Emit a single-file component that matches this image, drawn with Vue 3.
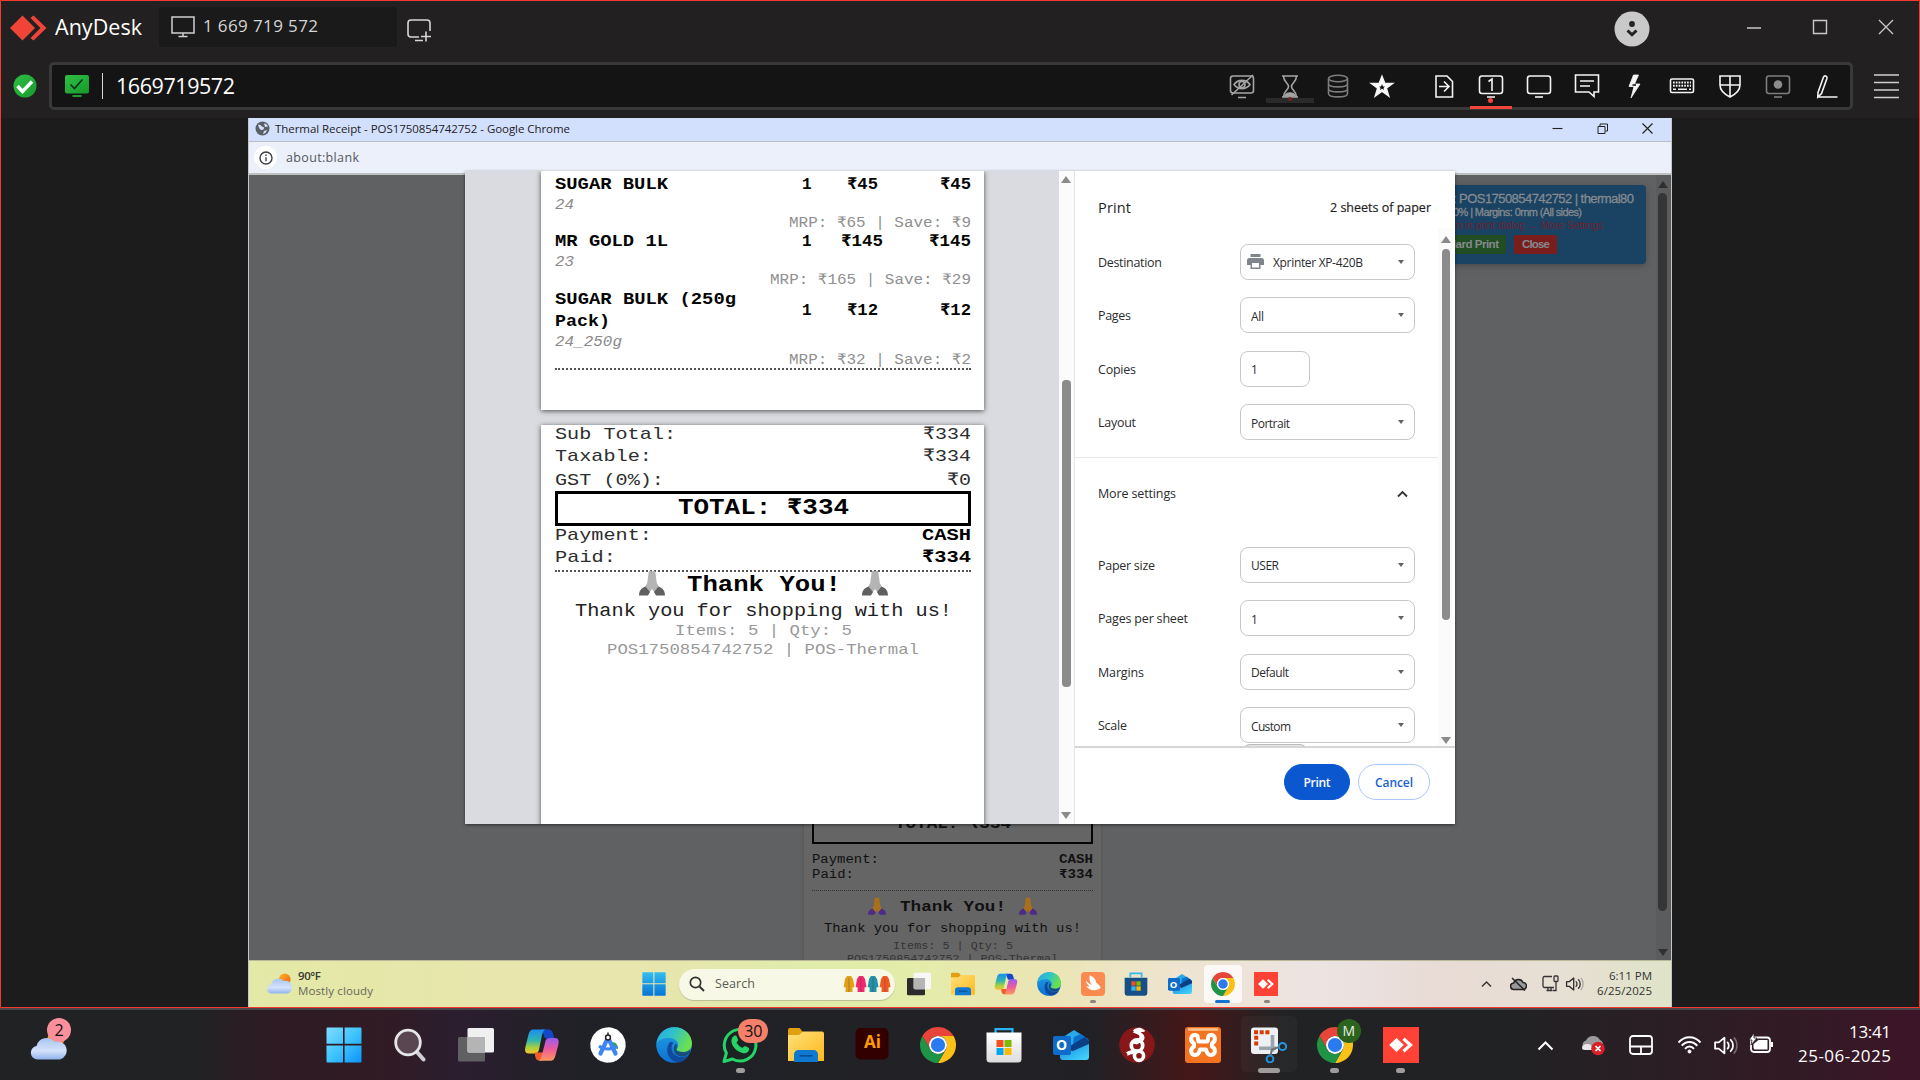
<script setup>
// Makes a label take the given width in pixels: by letter-spacing, or,
// with the .wide modifier, by widening the glyphs themselves.
const vFit = {
  mounted(el, { value, modifiers }) {
    const range = document.createRange()
    range.selectNodeContents(el)
    const natural = range.getBoundingClientRect().width
    if (modifiers.wide) {
      el.style.display = 'inline-block'
      el.style.transformOrigin = '0 50%'
      el.style.transform = `scaleX(${value / natural})`
      el.style.width = natural + 'px'
      el.style.flex = 'none'
      el.style.marginRight = value - natural + 'px'
      return
    }
    const gaps = el.textContent.length - 1
    if (gaps < 1) return
    const spacing = (value - natural) / gaps
    el.style.letterSpacing = spacing + 'px'
    el.style.marginRight = -spacing + 'px'
  },
}

const items = [
  { name: ['SUGAR BULK'], w: [113], sku: '24', sw: 19, price: '₹45', pw: 31, mrp: 'MRP: ₹65 | Save: ₹9', mw: 182 },
  { name: ['MR GOLD 1L'], w: [113], sku: '23', sw: 19, price: '₹145', pw: 42, mrp: 'MRP: ₹165 | Save: ₹29', mw: 201 },
  { name: ['SUGAR BULK (250g', 'Pack)'], w: [181, 55], sku: '24_250g', sw: 67, price: '₹12', pw: 31, mrp: 'MRP: ₹32 | Save: ₹2', mw: 182 },
]
const totals = [
  { k: 'Sub Total:', kw: 121, v: '₹334', vw: 48 },
  { k: 'Taxable:', kw: 97, v: '₹334', vw: 48 },
  { k: 'GST (0%):', kw: 109, v: '₹0', vw: 24 },
]
const basic = [
  { label: 'Destination', lw: 64, value: 'Xprinter XP-420B', vw: 90, icon: true },
  { label: 'Pages', lw: 33, value: 'All', vw: 13 },
  { label: 'Copies', lw: 38, value: '1', vw: 6, input: true },
  { label: 'Layout', lw: 38, value: 'Portrait', vw: 39 },
]
const more = [
  { label: 'Paper size', lw: 57, value: 'USER', vw: 28 },
  { label: 'Pages per sheet', lw: 90, value: '1', vw: 6 },
  { label: 'Margins', lw: 46, value: 'Default', vw: 38 },
  { label: 'Scale', lw: 29, value: 'Custom', vw: 40 },
]
const remoteApps = [
  { id: 'taskview-dark' }, { id: 'explorer' }, { id: 'copilot' }, { id: 'edge' },
  { id: 'swift', dot: true }, { id: 'store-blue' }, { id: 'outlook', letter: 'O' },
  { id: 'chrome', active: true }, { id: 'anydesk', dot: true },
]
const hostApps = [
  { id: 'windows' }, { id: 'search' }, { id: 'taskview' }, { id: 'copilot' }, { id: 'studio' },
  { id: 'edge' }, { id: 'whatsapp', badge: '30', dot: true }, { id: 'explorer' }, { id: 'illustrator', letter: 'Ai' },
  { id: 'chrome' }, { id: 'store' }, { id: 'outlook', letter: 'O' }, { id: 'dragon' }, { id: 'xampp' },
  { id: 'snip', active: true }, { id: 'chrome', avatar: 'M', dot: true }, { id: 'anydesk', dot: true },
]
const coats = ['#e0a018', '#f0286c', '#1f93a8', '#ee5a24']
</script>

<template>
  <div class="screen">
    <svg class="defs" width="0" height="0" aria-hidden="true">
      <defs>
        <linearGradient id="gWin" x1="0" y1="0" x2="1" y2="1"><stop offset="0" stop-color="#7fdcff" /><stop offset=".5" stop-color="#3fc4ff" /><stop offset="1" stop-color="#0a93fb" /></linearGradient>
        <linearGradient id="gWinR" x1="0" y1="0" x2="0" y2="1"><stop offset="0" stop-color="#35bdf0" /><stop offset="1" stop-color="#0674d8" /></linearGradient>
        <linearGradient id="gEdgeA" x1="0" y1="0" x2="1" y2=".4"><stop offset="0" stop-color="#2aa9e8" /><stop offset=".5" stop-color="#2fc3c8" /><stop offset="1" stop-color="#6be04f" /></linearGradient>
        <linearGradient id="gEdgeB" x1="0" y1="0" x2="0" y2="1"><stop offset="0" stop-color="#1fa2e6" /><stop offset="1" stop-color="#0f6fd0" /></linearGradient>
        <linearGradient id="gFold" x1="0" y1="0" x2="1" y2="1"><stop offset="0" stop-color="#ffe07c" /><stop offset="1" stop-color="#fdb91a" /></linearGradient>
        <linearGradient id="gCopA" x1="0" y1="0" x2="0" y2="1"><stop offset="0" stop-color="#1b8ef0" /><stop offset=".45" stop-color="#2fb6b0" /><stop offset=".75" stop-color="#a9cf3f" /><stop offset="1" stop-color="#f5c52c" /></linearGradient>
        <linearGradient id="gCopB" x1="0" y1="0" x2="0" y2="1"><stop offset="0" stop-color="#9a5cf0" /><stop offset=".5" stop-color="#ee5a9a" /><stop offset="1" stop-color="#ff9a5c" /></linearGradient>
        <linearGradient id="gCloud" x1="0" y1="0" x2="0" y2="1"><stop offset="0" stop-color="#a9c5f2" /><stop offset=".6" stop-color="#d4e2fa" /><stop offset="1" stop-color="#8fb2ec" /></linearGradient>
        <linearGradient id="gSun" x1="0" y1="0" x2="1" y2="1"><stop offset="0" stop-color="#fbb52b" /><stop offset="1" stop-color="#f0620f" /></linearGradient>
        <linearGradient id="gWhite" x1="0" y1="0" x2="0" y2="1"><stop offset="0" stop-color="#ffffff" /><stop offset="1" stop-color="#dcdcdc" /></linearGradient>
        <linearGradient id="gGreen" x1="0" y1="0" x2="1" y2="1"><stop offset="0" stop-color="#2fbf45" /><stop offset="1" stop-color="#159a2c" /></linearGradient>
        <linearGradient id="gOut" x1="0" y1="0" x2="1" y2="1"><stop offset="0" stop-color="#1784dd" /><stop offset="1" stop-color="#45dbff" /></linearGradient>
      </defs>
      <symbol id="windows" viewBox="0 0 36 36"><path fill="url(#gWin)" d="M1.5.5H17v16.300H.5V1.500a1 1 0 0 1 1-1zM18.600.5h15.900a1 1 0 0 1 1 1v15.300H18.600zM.5 18.400H17v17.100H1.500a1 1 0 0 1-1-1zM18.600 18.400h16.900v16.100a1 1 0 0 1-1 1H18.600z" /></symbol>
      <symbol id="windows-blue" viewBox="0 0 36 36"><path fill="url(#gWinR)" d="M1.500.5H17v16.300H.5V1.500a1 1 0 0 1 1-1zM18.600.5h15.900a1 1 0 0 1 1 1v15.300H18.600zM.5 18.400H17v17.100H1.500a1 1 0 0 1-1-1zM18.600 18.400h16.900v16.100a1 1 0 0 1-1 1H18.600z" /></symbol>
      <symbol id="search" viewBox="0 0 36 36"><path d="M24.500 24.500l7 8" stroke="#cfcfd2" stroke-width="4" stroke-linecap="round" /><circle cx="16" cy="15.500" r="12.300" fill="#5a4650" stroke="#e6e6e8" stroke-width="2.800" /></symbol>
      <symbol id="taskview" viewBox="0 0 36 36"><rect x="0" y="10" width="27" height="24.500" rx="1.500" fill="#606062" /><rect x="9.500" y="1" width="26.500" height="24.500" rx="1.500" fill="#f0f0f0" /><path d="M9.500 10H27v15.500H11a1.500 1.500 0 0 1-1.500-1.500z" fill="#b4b4b4" /></symbol>
      <symbol id="taskview-dark" viewBox="0 0 36 36"><rect x="0" y="9" width="27" height="26" rx="2" fill="#2b2b2b" /><rect x="10" y="1" width="26" height="25" rx="2" fill="#f7f7f5" /><path d="M10 9H27v17H12a2 2 0 0 1-2-2z" fill="#b5b5b3" /></symbol>
      <symbol id="copilot" viewBox="0 0 36 36">
        <path fill="#1348c8" d="M17 2.500h8c2.500 0 3.500 2 4.500 6l.8 3h-8.500c-2 0-2.800-9-4.800-9z" />
        <path fill="url(#gCopA)" d="M9.500 2.500h12c-2.500 1-3.200 4-4 8l-2.500 12c-.6 2.600-1.800 4-4 4H4.500c-3.400 0-4-3-3-7l3-12c.8-3 2-5 5-5z" />
        <path fill="#ee5d2c" d="M11 25.500h8.500l-2 8h-2c-3 0-3.800-2-4.500-5z" />
        <path fill="url(#gCopB)" d="M25.500 11h5.800c3.400 0 4 3 3 7l-3 11c-.9 3-2 4.800-5 4.800H14.500c2.500-1 3.200-4 4-8l2.800-11c.6-2.600 1.800-3.800 4.200-3.800z" />
      </symbol>
      <symbol id="studio" viewBox="0 0 36 36">
        <circle cx="18" cy="18" r="16" fill="#fff" stroke="#fff" stroke-width="3.400" stroke-dasharray="4.200 2.080" stroke-linecap="round" />
        <path fill="#2f9e44" d="M22 15c4 0 6 3 6 7l-5-1z" />
        <path d="M17.800 11L10.500 26.500M18.200 11l7.300 15.500" stroke="#3f86f5" stroke-width="4.200" stroke-linecap="round" /><path d="M9 19c5 4 13 4 18 0" fill="none" stroke="#3f86f5" stroke-width="3" />
        <circle cx="18" cy="10.500" r="2.400" fill="#fff" stroke="#222" stroke-width="1.500" /><path d="M18 5.500V8" stroke="#222" stroke-width="1.500" />
      </symbol>
      <symbol id="edge" viewBox="0 0 36 36">
        <circle cx="18" cy="18" r="17.800" fill="url(#gEdgeB)" />
        <path fill="#104a9c" d="M14 15c-4 5-4 13 2 18 6 4.500 13 2 17-5-5 3-12 3-15.500-1.500-2.800-3.500-2.500-8 .2-11z" />
        <path fill="url(#gEdgeA)" d="M.6 16C2.500 6 9.500.2 18.500.2 29 .2 36 8 36 16.500c0 5.500-4 8.500-8.500 8.500-4 0-7-1-7-2.500 0-1 1.700-1.800 1.700-4.500 0-4-4-7-9.200-7C7 11 2.500 13 .6 16z" />
        <path d="M34 25.500c-3 4.500-9 5-13 2.500-3.500-2.300-4.500-7-1.500-11.500 3 2 1 5 1 6 0 1.500 3 2.500 7 2.500 2.500 0 4.700-.8 6.500-2.300z" fill="#1e1f24" fill-opacity=".5" />
      </symbol>
      <symbol id="whatsapp" viewBox="0 0 36 36"><path d="M2 34.500l2.400-8.500A15.800 15.800 0 1 1 10.500 32z" fill="#1c2423" stroke="#25d366" stroke-width="3" stroke-linejoin="round" /><path fill="#25d366" d="M12 9c1.400-.9 2.400-.5 3 1l1 2.600c.3.900-.5 1.800-1.500 2.900 1.500 2.800 3.200 4.300 6 5.500 1.200-1.600 1.900-2.200 3-1.700l2.700 1.300c1.200.6 1.200 1.500.6 3-1 2.300-3.600 3.100-6.200 2.300C14.500 24.400 10.500 20 9.600 15.500 9 12.500 10 10.200 12 9z" /></symbol>
      <symbol id="explorer" viewBox="0 0 36 36"><path fill="#e0a010" d="M0 3a2 2 0 0 1 2-2h9.500l3 3.500V10H0z" /><path fill="url(#gFold)" d="M0 8h11l4-3.500h19a2 2 0 0 1 2 2V34H0z" /><path fill="#0f78d0" d="M6 35v-7.500a4.500 4.500 0 0 1 4.500-4.500h15a4.500 4.500 0 0 1 4.500 4.500V35z" /><path d="M11.500 28.800h13" stroke="#0a4d94" stroke-width="1.600" /></symbol>
      <symbol id="illustrator" viewBox="0 0 36 36"><rect x="1.500" y="1" width="33" height="31.500" rx="5" fill="#330000" /></symbol>
      <symbol id="chrome" viewBox="2 2 44 44"><path fill="#e8453a" d="M4.950 13A22 22 0 0 1 43.050 13H24a11 11 0 0 0-9.530 16.500z" /><path fill="#fbc116" d="M43.050 13A22 22 0 0 1 24 46l9.530-16.500A11 11 0 0 0 24 13z" /><path fill="#1f9447" d="M24 46A22 22 0 0 1 4.950 13l9.520 16.500a11 11 0 0 0 19.060 0z" /><circle cx="24" cy="24" r="11" fill="#fff" /><circle cx="24" cy="24" r="8.700" fill="#2a7bf0" /></symbol>
      <symbol id="store" viewBox="0 0 36 36"><path d="M9.500 7V2.200h17V7" fill="none" stroke="#2bb4f0" stroke-width="2.200" /><path fill="url(#gWhite)" d="M.5 5.500h35V32a3.500 3.500 0 0 1-3.500 3.500H4A3.500 3.500 0 0 1 .5 32z" /><path fill="#f25022" d="M10.500 13h7v7h-7z" /><path fill="#7fba00" d="M18.500 13h7v7h-7z" /><path fill="#00a4ef" d="M10.500 21h7v7h-7z" /><path fill="#ffb900" d="M18.500 21h7v7h-7z" /></symbol>
      <symbol id="store-blue" viewBox="0 0 36 36"><path d="M9.500 8V2.200h17V8" fill="none" stroke="#35b8ee" stroke-width="2.600" /><path fill="#154f86" d="M1 8.500h34V32a3.500 3.500 0 0 1-3.500 3.500h-27A3.500 3.500 0 0 1 1 32z" /><path fill="#f25022" d="M11 14h6.500v6.500H11z" /><path fill="#7fba00" d="M18.500 14H25v6.500h-6.500z" /><path fill="#35b8ee" d="M11 21.500h6.500V28H11z" /><path fill="#ffb900" d="M18.500 21.500H25V28h-6.500z" /></symbol>
      <symbol id="outlook" viewBox="0 0 36 36"><path fill="#2aa8ea" d="M7 12L21 3l14 9-2 8H9z" /><path fill="#0c6ecb" d="M21 10l7-3 8 6v6l-14 8-3-3z" /><path fill="#0a3f86" d="M17 19l15-9 4 4v4l-16 9z" /><path fill="url(#gOut)" d="M7 20l13 4L36 17v13a3 3 0 0 1-3 3H10a3 3 0 0 1-3-3z" /><rect x="0" y="9" width="18" height="19" rx="2" fill="#0f6cc9" /></symbol>
      <symbol id="dragon" viewBox="0 0 36 36">
        <circle cx="18" cy="18" r="17.800" fill="#88171a" />
        <path fill="#fff" d="M14 3.500C16 1 20 .3 22.500 1.300L26 3.500l-.5 1.300-4 .4c4 2.300 5 5.300 3 8.300-1.500 2-5 2.500-6.500 4l-4-1c1-3.500 6-4 6.500-6.500.3-2-2-2.700-3.500-3.300-1.500-.5-2.500-1-3.500-.8L15 4.800z" />
        <circle cx="18" cy="18.500" r="5.700" fill="none" stroke="#fff" stroke-width="3.700" />
        <circle cx="20" cy="28.800" r="4.600" fill="none" stroke="#fff" stroke-width="3.600" />
        <path fill="#fff" d="M7 25.500c3-2 7-3 11-2.500l-3 4.500c-2.500-.5-4.500 0-6.500 1.500 0-1.500 0-2.500-1.500-3.500z" />
      </symbol>
      <symbol id="xampp" viewBox="0 0 36 36"><rect width="36" height="36" rx="3" fill="#f37321" /><path d="M4 2.500h28" stroke="#ffc48f" stroke-width="2.400" stroke-linecap="round" />
        <path fill="none" stroke="#fff" stroke-width="4" stroke-linejoin="round" d="M13.500 14.500c-1.500-5 .5-6-3-6.500-5-.3-6 5.500-1.500 8.500v3c-4.500 3-3.500 8.500 1.500 8.500 3.500 0 4-3.500 4.500-5.500h6c.5 2 1 5.500 4.500 5.500 5 0 6-5.500 1.500-8.500v-3c4.500-3 3.500-8.800-1.500-8.500-3.500.5-1.500 1.500-3 6.500z" /></symbol>
      <symbol id="snip" viewBox="0 0 36 36"><rect width="27" height="26.500" y=".5" rx="3" fill="#eef1f4" /><path fill="none" stroke="#d83b01" stroke-width="4" stroke-dasharray="4 1.700" d="M3 5.300h17" /><path fill="none" stroke="#d83b01" stroke-width="4" stroke-dasharray="4 1.700" d="M5.200 8.800v11" /><path d="M21.500 8v16.500M8 21.300h17" stroke="#9ba3ab" stroke-width="3.600" /><circle cx="31.500" cy="19.500" r="3.600" fill="none" stroke="#2196e0" stroke-width="2" /><circle cx="19" cy="32" r="3.400" fill="none" stroke="#2196e0" stroke-width="2" /><path d="M19.500 28.500l1.500-6 7-2.500" fill="none" stroke="#6b737b" stroke-width="2" /></symbol>
      <symbol id="anydesk" viewBox="0 0 36 36"><rect width="36" height="36" fill="#ff4136" /><path fill="#fff" d="M13.500 11l7.300 7-7.300 7-7.300-7z" /><path d="M20.500 11.700l7 6.300-7 6.300" fill="none" stroke="#fff" stroke-width="3.200" /></symbol>
      <symbol id="swift" viewBox="0 0 36 36"><rect width="36" height="36" rx="6" fill="#fb8a50" /><path fill="#fff" d="M13 5c6 2 9 6 10 11 2 2 6 4 6.500 8l-3 2c-7 3-14 1-19.500-5 2 .8 4 1 6 .5-3-2-5-5-6-9 3 4 6 6 9 7-3-4-4-9-3-14.500z" /></symbol>
      <symbol id="weather" viewBox="0 0 36 30"><circle cx="25.500" cy="9" r="8.500" fill="url(#gSun)" /><path fill="url(#gCloud)" d="M7 29.500a6.800 6.800 0 0 1-1-13.500A10.500 10.500 0 0 1 24 11.500a9 9 0 0 1 5.500 18z" /></symbol>
      <symbol id="hands" viewBox="0 0 26 26"><path class="palm" d="M12.400 1.500c0-1.200-2.400-1-2.700.6L8.200 13 6 17l4.500 5.500L13 19l2.500 3.500L20 17l-2.200-4L16.300 2.100C16 .5 13.600.3 13.600 1.500z" /><path class="cuff" d="M6.500 16.500L11 22l-2 3.500H0C0 21 2 18 6.500 16.500zM19.500 16.500L15 22l2 3.500h9C26 21 24 18 19.500 16.500z" /></symbol>
      <symbol id="speaker" viewBox="0 0 24 20"><path d="M2 7h3.500L11 2.500v15L5.500 13H2z" fill="none" stroke="currentColor" stroke-width="1.700" stroke-linejoin="round" /><path d="M14 7c1.500 1.500 1.500 4.500 0 6M17 4.500c3 3 3 8 0 11" fill="none" stroke="currentColor" stroke-width="1.700" stroke-linecap="round" /><path d="M20 2.200c4 4.500 4 11 0 15.600" fill="none" stroke="currentColor" stroke-width="1.500" opacity=".35" /></symbol>
    </svg>

    <section class="client">
      <header class="titlebar">
        <svg class="brand" width="37" height="26" viewBox="0 0 37 26"><path fill="#f04438" d="M12.500.5L25 13 12.500 25.500 0 13z" /><path fill="#f04438" d="M20.500 3l3-2.500L36.500 13l-13 12.500-3-2.500L30.500 13z" /></svg>
        <span class="brand-name" v-fit="87">AnyDesk</span>
        <div class="tab">
          <svg width="24" height="22" viewBox="0 0 24 22" fill="none" stroke="#cfcfcf" stroke-width="1.500"><path d="M1 1h22v16H1zM12 17v3M7.500 20.500h9" /></svg>
          <span v-fit="115">1 669 719 572</span>
        </div>
        <svg class="new-tab" width="25" height="24" viewBox="0 0 25 24" fill="none" stroke="#d5d5d5" stroke-width="1.600"><path d="M23 12V4a3 3 0 0 0-3-3H4a3 3 0 0 0-3 3v11a3 3 0 0 0 3 3h8M8 21.500h8M19 12.500v10M14 17.500h10" /></svg>
        <svg class="account" width="36" height="36" viewBox="0 0 36 36"><circle cx="18" cy="18" r="17.500" fill="#c9c9c9" /><circle cx="18" cy="13" r="2.900" fill="#222" /><path d="M13.500 19.500l4.500 4.300 4.500-4.300" fill="none" stroke="#222" stroke-width="3" /></svg>
        <svg class="win-min" width="16" height="16" viewBox="0 0 16 16"><path d="M1 9h14" stroke="#c9c9c9" stroke-width="1.500" /></svg>
        <svg class="win-max" width="16" height="16" viewBox="0 0 16 16"><path d="M1.500 1.500h13v13h-13z" fill="none" stroke="#c9c9c9" stroke-width="1.400" /></svg>
        <svg class="win-close" width="16" height="16" viewBox="0 0 16 16"><path d="M1 1l14 14M15 1L1 15" stroke="#c9c9c9" stroke-width="1.300" /></svg>
      </header>

      <div class="toolbar">
        <svg class="ok" width="24" height="24" viewBox="0 0 24 24"><circle cx="12" cy="12" r="11.500" fill="url(#gGreen)" /><path d="M4.500 12l5 5.500 9.500-10" fill="none" stroke="#fff" stroke-width="3.400" /></svg>
        <div class="address">
          <svg class="peer" width="24" height="23" viewBox="0 0 24 23"><rect width="24" height="18.500" rx="2" fill="url(#gGreen)" /><path d="M5.500 9.500l4 4 8-9" fill="none" stroke="#0c3313" stroke-width="1.600" /><path d="M7.500 21h9" stroke="#22ac38" stroke-width="1.800" /></svg>
          <i class="rule"></i>
          <span class="peer-id" v-fit="119">1669719572</span>
          <div class="tools">
            <span class="tool dim"><svg viewBox="0 0 26 26"><rect x="1.500" y="3" width="23" height="17" rx="2.500" /><path d="M5 11.500c4-5.500 12-5.500 16 0-4 5.500-12 5.500-16 0zM2.500 22L24 2M9 24.500h8" /><circle cx="13" cy="11.500" r="3" /></svg></span>
            <span class="tool dim timer"><svg viewBox="0 0 26 26"><path d="M5 3h16M5 24h16M6.500 3c0 6 5 7 5 10.500S6.500 18 6.500 24M19.500 3c0 6-5 7-5 10.500s5 4.500 5 10.500" /><path d="M8 23c1-4 9-4 10 0z" fill="currentColor" /></svg></span>
            <span class="tool dimmer"><svg viewBox="0 0 26 26"><ellipse cx="13" cy="5.500" rx="9.500" ry="3.300" /><path d="M3.500 5.500v15c0 4.500 19 4.500 19 0v-15M3.500 10.500c0 4.500 19 4.500 19 0M3.500 15.500c0 4.500 19 4.500 19 0" /></svg></span>
            <span class="tool star"><svg viewBox="0 0 26 26"><path d="M13 3.500l2.800 7h7.700l-6.200 4.700 2.400 7.800L13 18.200 6.300 23l2.400-7.800-6.200-4.700h7.700z" fill="#fff" /><path d="M13 11l1 2.500h2l-1.500 1.500.5 2-2-1.200-2 1.200.5-2L10 13.500h2z" fill="#141414" stroke="none" /></svg></span>
            <span class="tool group"><svg viewBox="0 0 26 26"><path d="M5 3h11l5.500 5.500V24H5zM8 13.500h9.500M13 8.500l5 5-5 5" /></svg></span>
            <span class="tool current"><svg viewBox="0 0 26 26"><rect x="1.500" y="3" width="23" height="17.500" rx="2.500" /><path d="M10.500 8.500l3.500-2.500v12M9 24h8" /></svg></span>
            <span class="tool"><svg viewBox="0 0 26 26"><rect x="1.500" y="3" width="23" height="17.500" rx="2.500" /><path d="M9 24h8" /></svg></span>
            <span class="tool"><svg viewBox="0 0 26 26"><path d="M1.500 2h23v17H20v4.500L15 19H1.500zM6 8h14M6 13h10" /></svg></span>
            <span class="tool"><svg viewBox="0 0 26 26"><path d="M12.500 2L8 13.500h5L10 25l9-14h-5.500L17.500 2z" fill="#f4f4f4" stroke-width=".8" /><path d="M11.500 12h3.500" stroke="#141414" /></svg></span>
            <span class="tool"><svg viewBox="0 0 26 26"><rect x="1.500" y="6" width="23" height="13.500" rx="1.500" /><path d="M4 9.500h18M4 12.700h18" stroke-dasharray="1.700 1.100" stroke-width="1.900" /><path d="M4 16.200h3M9 16.200h9M20 16.200h2" /></svg></span>
            <span class="tool"><svg viewBox="0 0 26 26"><path d="M3 3h20v9c0 6-5 9.500-10 12-5-2.500-10-6-10-12zM13 3v21M3 12h20" /></svg></span>
            <span class="tool dimmer"><svg viewBox="0 0 26 26"><rect x="1.500" y="3" width="23" height="17.500" rx="2.500" /><path d="M9 24h8" /><circle cx="13" cy="11.500" r="4.300" fill="#8c8c8c" stroke="none" /></svg></span>
            <span class="tool"><svg viewBox="0 0 26 26"><path d="M4.500 24h20M5 19.500L10.500 4c1-2 4-1 3.500 1.200L8.500 20.500 4.800 24z" /></svg></span>
          </div>
        </div>
        <svg class="menu" width="25" height="26" viewBox="0 0 25 26"><path d="M0 2h25M0 9.500h25M0 17h25M0 24.500h25" stroke="#cfcfcf" stroke-width="1.500" /></svg>
      </div>

      <div class="stage">
        <div class="remote">
          <div class="chrome-title">
            <svg width="15" height="15" viewBox="0 0 15 15"><circle cx="7.500" cy="7.500" r="7" fill="#5b6068" /><path d="M3 4c3-1 3 2 5 2s1 3-1 3-3-2-4-5zM9 2.500c2 0 3 1 4 3l-3 .5zM9 10l3-1-1.500 3L8 13z" fill="#d3e0fd" /></svg>
            <span v-fit="295">Thermal Receipt - POS1750854742752 - Google Chrome</span>
            <svg class="c-min" width="11" height="11" viewBox="0 0 11 11"><path d="M.5 5.500h10" stroke="#222" stroke-width="1.100" /></svg>
            <svg class="c-res" width="11" height="11" viewBox="0 0 11 11" fill="none" stroke="#222"><path d="M1 3.500h7v7H1zM3 3V1h7.500v7H8.500" /></svg>
            <svg class="c-close" width="11" height="11" viewBox="0 0 11 11"><path d="M.5.5l10 10M10.500.5l-10 10" stroke="#222" stroke-width="1.200" /></svg>
          </div>
          <div class="url">
            <span class="info"><svg width="14" height="14" viewBox="0 0 14 14"><circle cx="7" cy="7" r="6" fill="none" stroke="#3c4043" stroke-width="1.400" /><path d="M7 6.200v4M7 3.500v1.400" stroke="#3c4043" stroke-width="1.400" /></svg></span>
            <span class="about" v-fit="73">about:blank</span>
          </div>
          <div class="page">
            <div class="under">
              <div class="u-total"><span v-fit.wide="116">TOTAL: ₹334</span></div>
              <div class="u-row"><span v-fit.wide="67">Payment:</span><b v-fit.wide="34">CASH</b></div>
              <div class="u-row"><span v-fit.wide="42">Paid:</span><b v-fit.wide="34">₹334</b></div>
              <div class="u-dots"></div>
              <div class="u-thanks"><svg class="tint" width="18" height="18"><use href="#hands" /></svg><b v-fit.wide="106">Thank You!</b><svg class="tint" width="18" height="18"><use href="#hands" /></svg></div>
              <div class="u-line"><span v-fit.wide="257">Thank you for shopping with us!</span></div>
              <div class="u-small"><span v-fit.wide="120">Items: 5 | Qty: 5</span></div>
              <div class="u-small last"><span v-fit.wide="211">POS1750854742752 | POS-Thermal</span></div>
            </div>
            <div class="page-scroll"><i class="up"></i><i class="thumb"></i><i class="down"></i></div>
            <div class="banner">
              <p class="b1"><span v-fit="181">: POS1750854742752 | thermal80</span></p>
              <p class="b2"><span v-fit="129">0% | Margins: 0mm (All sides)</span></p>
              <p class="b3"><span v-fit="150">m in print dialog → More Settings</span></p>
              <div class="b-btns"><span class="go"><em v-fit="50">dard Print</em></span><span class="stop"><em v-fit="28">Close</em></span></div>
            </div>
          </div>

          <div class="dialog">
            <div class="preview">
              <div class="sheets">
                <div class="sheet first">
                  <div v-for="item in items" :key="item.sku" class="item">
                    <div class="item-main">
                      <div class="item-name"><div v-for="(line, i) in item.name" :key="line" class="item-line"><span v-fit.wide="item.w[i]">{{ line }}</span></div></div>
                      <div class="qty">1</div>
                      <div class="price"><span v-fit.wide="item.pw">{{ item.price }}</span></div>
                      <div class="sum"><span v-fit.wide="item.pw">{{ item.price }}</span></div>
                    </div>
                    <div class="sku"><span v-fit.wide="item.sw">{{ item.sku }}</span></div>
                    <div class="mrp"><span v-fit.wide="item.mw">{{ item.mrp }}</span></div>
                  </div>
                  <div class="dots"></div>
                </div>
                <div class="sheet second">
                  <div v-for="t in totals" :key="t.k" class="row"><span v-fit.wide="t.kw">{{ t.k }}</span><span v-fit.wide="t.vw">{{ t.v }}</span></div>
                  <div class="total"><b v-fit.wide="171">TOTAL: ₹334</b></div>
                  <div class="row"><span v-fit.wide="97">Payment:</span><b v-fit.wide="49">CASH</b></div>
                  <div class="row"><span v-fit.wide="61">Paid:</span><b v-fit.wide="49">₹334</b></div>
                  <div class="dots"></div>
                  <div class="thanks"><svg class="gray" width="26" height="26"><use href="#hands" /></svg><b v-fit.wide="154">Thank You!</b><svg class="gray" width="26" height="26"><use href="#hands" /></svg></div>
                  <div class="line"><span v-fit.wide="377">Thank you for shopping with us!</span></div>
                  <div class="small"><span v-fit.wide="177">Items: 5 | Qty: 5</span></div>
                  <div class="small"><span v-fit.wide="312">POS1750854742752 | POS-Thermal</span></div>
                </div>
              </div>
              <div class="scroll outer"><i class="up"></i><i class="thumb"></i><i class="down"></i></div>
            </div>
            <div class="panel">
              <div class="panel-head"><h1 v-fit="33">Print</h1><span v-fit="101">2 sheets of paper</span></div>
              <div class="panel-body">
                <div class="form">
                  <div v-for="f in basic" :key="f.label" class="field">
                    <label><span v-fit="f.lw">{{ f.label }}</span></label>
                    <div class="box" :class="{ input: f.input, printer: f.icon }">
                      <svg v-if="f.icon" width="17" height="17" viewBox="0 0 17 17"><path fill="#80868b" d="M3.500 1h10v3h-10zM2.500 5h12A2.500 2.500 0 0 1 17 7.500V12h-3.500v4h-10v-4H0V7.500A2.500 2.500 0 0 1 2.500 5zM5 10v4.500h7V10z" /></svg>
                      <span v-fit="f.vw">{{ f.value }}</span>
                      <i v-if="!f.input" class="caret"></i>
                    </div>
                  </div>
                  <div class="more-row"><span v-fit="78">More settings</span><svg width="11" height="8" viewBox="0 0 11 8"><path d="M1 6.500L5.500 2 10 6.500" fill="none" stroke="#333" stroke-width="1.800" /></svg></div>
                  <div v-for="f in more" :key="f.label" class="field">
                    <label><span v-fit="f.lw">{{ f.label }}</span></label>
                    <div class="box"><span v-fit="f.vw">{{ f.value }}</span><i class="caret"></i></div>
                  </div>
                  <div class="peek"></div>
                </div>
                <div class="scroll inner"><i class="up"></i><i class="thumb"></i><i class="down"></i></div>
              </div>
              <div class="panel-foot"><button class="primary"><span v-fit="27">Print</span></button><button><span v-fit="38">Cancel</span></button></div>
            </div>
          </div>

          <div class="r-taskbar">
            <svg class="r-weather" width="25" height="21"><use href="#weather" /></svg>
            <div class="r-temp"><b v-fit="23">90°F</b><span v-fit="75">Mostly cloudy</span></div>
            <svg class="r-start" width="24" height="24"><use href="#windows-blue" /></svg>
            <div class="r-search">
              <svg width="16" height="16" viewBox="0 0 16 16"><circle cx="6.500" cy="6.500" r="5.200" fill="none" stroke="#333" stroke-width="1.700" /><path d="M10.500 10.500L15 15" stroke="#333" stroke-width="2" /></svg>
              <span v-fit="40">Search</span>
              <svg class="coats" width="48" height="18" viewBox="0 0 48 18"><g v-for="(c, i) in coats" :key="c" :transform="`translate(${i * 12} 0)`"><path :fill="c" d="M4 1h4l2 3 1.500 8-2 .5L9.500 17h-7l.2-4.500-2-.5L2 4z" /><path d="M6 3v14" stroke="#7a2c2c" stroke-width=".7" opacity=".5" /></g></svg>
            </div>
            <div class="r-apps">
              <span v-for="a in remoteApps" :key="a.id" class="r-app" :class="{ active: a.active, dot: a.dot }"><svg width="24" height="24"><use :href="'#' + a.id" /></svg><span v-if="a.letter" class="letter">{{ a.letter }}</span></span>
            </div>
            <div class="r-tray">
              <svg width="11" height="8" viewBox="0 0 11 8"><path d="M1 6.500L5.500 2 10 6.500" fill="none" stroke="#333" stroke-width="1.400" /></svg>
              <svg class="t-cloud" width="17" height="14" viewBox="0 0 17 14"><path d="M4 12.500a3.300 3.300 0 0 1-.3-6.600A5 5 0 0 1 13 5.500a3.500 3.500 0 0 1 0 7z" fill="#999" stroke="#222" stroke-width="1.500" /><path d="M2 1l13 12.500" stroke="#222" stroke-width="1.500" /></svg>
              <svg class="t-net" width="17" height="17" viewBox="0 0 17 17" fill="none" stroke="#333" stroke-width="1.300"><path d="M10 1.500H2.500A1.500 1.500 0 0 0 1 3v8a1.500 1.500 0 0 0 1.500 1.500H12M4.500 15.500h6M6 13v2.500M9 13v2.500M14 7v8.500h-3" /><rect x="12" y="1" width="4" height="5.500" rx="1" /></svg>
              <svg class="t-snd" width="19" height="16"><use href="#speaker" /></svg>
              <div class="r-clock"><span v-fit="43">6:11 PM</span><span v-fit="55">6/25/2025</span></div>
            </div>
          </div>
        </div>
      </div>
    </section>

    <footer class="taskbar">
      <div class="weather"><svg width="37" height="34" viewBox="0 0 37 30"><use href="#weather" /></svg><span class="badge">2</span></div>
      <div class="apps">
        <span v-for="(a, i) in hostApps" :key="i" class="app" :class="{ active: a.active, dot: a.dot }">
          <svg width="36" height="36"><use :href="'#' + a.id" /></svg>
          <span v-if="a.letter" class="letter" :class="a.id">{{ a.letter }}</span>
          <span v-if="a.badge" class="count">{{ a.badge }}</span>
          <span v-if="a.avatar" class="avatar">{{ a.avatar }}</span>
        </span>
      </div>
      <div class="tray">
        <svg width="17" height="11" viewBox="0 0 17 11"><path d="M1.500 9.500l7-7 7 7" fill="none" stroke="#fff" stroke-width="2" /></svg>
        <svg class="h-cloud" width="25" height="22" viewBox="0 0 25 22"><path fill="#9b9b9d" d="M5 16a5 5 0 0 1 0-9.500A8 8 0 0 1 19 6c4 1 4 8 1 10z" /><path fill="#e8e8e8" d="M1 14c0-4 6-5 9-3l2 5H4c-2 0-3-1-3-2z" /><circle cx="17" cy="14.500" r="6.800" fill="#d9202a" /><path d="M14.500 12l5 5M19.500 12l-5 5" stroke="#fff" stroke-width="1.700" /></svg>
        <svg class="h-pad" width="24" height="20" viewBox="0 0 24 20" fill="none" stroke="#fff" stroke-width="1.800"><rect x="1" y="1" width="22" height="18" rx="3" /><path d="M1 11.500h22M12 11.500V19" /></svg>
        <svg class="h-wifi" width="25" height="19" viewBox="0 0 25 19" fill="none" stroke="#fff" stroke-width="2"><path d="M1.500 7.500c6-7 16-7 22 0M4.700 10.700c4.500-5 11-5 15.600 0M8 13.800c2.500-3 6.500-3 9 0" /><circle cx="12.500" cy="16.500" r="1.500" fill="#fff" stroke-width="1" /></svg>
        <svg class="h-snd" width="25" height="21"><use href="#speaker" /></svg>
        <svg class="h-bat" width="25" height="21" viewBox="0 0 25 21"><rect x="2" y="4.500" width="19" height="14.500" rx="3" fill="none" stroke="#fff" stroke-width="1.800" /><path d="M4.500 15V11l5-4h9v9.500h-13z" fill="#fff" /><path d="M22 9h2v5h-2z" fill="#fff" /><path d="M5 0L0 7h3L2 12l6-7H5z" fill="#fff" stroke="#241f22" stroke-width=".8" /></svg>
        <div class="clock"><span v-fit="42">13:41</span><span v-fit="93">25-06-2025</span></div>
      </div>
    </footer>
  </div>
</template>

<style>
body { margin: 0; background: #1c1c1c; overflow: hidden; }
</style>

<style scoped>
.screen { width: 1920px; height: 1080px; display: flex; flex-direction: column; font-family: "Open Sans", "Noto Sans", sans-serif; overflow: hidden; }
.screen * { box-sizing: border-box; }
.screen svg { flex: none; display: block; }
.screen span, .screen b { white-space: pre; }
.defs { position: absolute; }
.client { height: 1008px; border: 1px solid #f5392f; background: #1c1c1c; display: flex; flex-direction: column; }

.titlebar { height: 53px; background: #232021; display: flex; align-items: flex-start; padding-left: 9px; flex: none; }
.brand { margin-top: 14px; }
.brand-name { margin-left: 8px; width: 88px; font-size: 21.500px; line-height: 30px; margin-top: 11px; color: #fff; }
.tab { width: 238px; height: 40px; margin: 6px 0 0 16px; background: #1a1a1a; border-radius: 3px; padding-left: 12px; display: flex; align-items: center; gap: 8px; color: #d4d4d4; font-size: 17px; line-height: 38px; }
.tab span { margin-top: -2px; }
.new-tab { margin: 18px 0 0 10px; }
.account { margin: 10px 0 0 auto; }
.win-min { margin: 18px 0 0 96px; }
.win-max { margin: 18px 0 0 50px; }
.win-close { margin: 18px 25px 0 50px; }

.toolbar { height: 64px; flex: none; background: #222021; display: flex; padding: 8px 20px 0 12px; }
.ok { margin-top: 12px; }
.address { margin-left: 12px; width: 1804px; height: 48px; border: 3px solid #3a3939; border-radius: 5px; background: #141414; display: flex; align-items: center; padding-left: 13px; }
.rule { width: 1px; height: 26px; background: #d8d8d8; margin-left: 13px; }
.peer-id { color: #fff; font-size: 21.500px; margin-left: 13px; line-height: 30px; }
.tools { margin-left: auto; margin-right: -1px; display: flex; height: 42px; }
.tool { width: 47.900px; height: 42px; display: flex; align-items: center; justify-content: center; position: relative; color: #f4f4f4; }
.tool svg { width: 26px; height: 26px; fill: none; stroke: currentColor; stroke-width: 1.600; }
.dim { color: #a5a5a5; }
.dimmer { color: #7d7d7d; }
.star { margin-left: -4px; }
.group { margin-left: 14px; }
.timer::after { content: ""; position: absolute; left: 0; right: 0; bottom: 4px; height: 5px; background: #2b2a2a; }
.timer::before { content: ""; position: absolute; left: 22px; bottom: 6px; width: 4px; height: 4px; background: #6d2422; z-index: 1; border-radius: 2px; }
.current::after { content: ""; position: absolute; left: 3px; right: 3px; bottom: -2px; height: 3px; background: #f5453b; }
.current::before { content: ""; position: absolute; left: 21px; bottom: 4px; width: 5px; height: 5px; border-radius: 50%; background: #f5453b; }
.tools .current, .tools .current ~ .tool { left: -1px; }
.menu { margin: 11px 0 0 21px; }

.stage { flex: 1; min-height: 0; display: flex; padding-left: 247px; }
.remote { position: relative; width: 1424px; height: 889px; border: solid #c4c6c8; border-width: 0 1px; display: flex; flex-direction: column; }
.chrome-title { height: 24px; flex: none; background: #d3e0fd; border-bottom: 1px solid #bcbfc6; display: flex; align-items: center; padding-left: 6px; font-size: 11.500px; color: #1f2023; }
.chrome-title span { margin-left: 5px; line-height: 20px; margin-top: -1px; }
.chrome-title svg { margin-top: -2px; }
.chrome-title .c-min { margin-left: auto; }
.chrome-title .c-res { margin-left: 34px; }
.chrome-title .c-close { margin: -2px 18px 0 34px; }
.url { height: 33px; flex: none; background: #ebf0fa; border-bottom: 2px solid #bfc0c1; display: flex; align-items: center; padding-left: 5px; font-size: 12.500px; color: #55585c; }
.info { width: 23px; height: 23px; background: #fff; border-radius: 50%; display: flex; align-items: center; justify-content: center; }
.about { margin-left: 9px; line-height: 20px; }

.page { position: relative; flex: 1; min-height: 0; background: #606163; overflow: hidden; display: flex; }
.under { width: 297px; margin-left: 555px; padding: 0 8px 0 8px; background: #656565; box-shadow: 0 0 3px #4d4d4d; font-family: "Liberation Mono", monospace; color: #111; font-size: 12.500px; }
.u-total { height: 669px; border: 2px solid #050505; display: flex; align-items: flex-end; justify-content: center; font-weight: 700; font-size: 15px; line-height: 26px; padding-bottom: 4px; }
.u-row { display: flex; justify-content: space-between; line-height: 15px; height: 15px; }
.u-total + .u-row { margin-top: 9px; }
.u-dots { border-top: 1px dotted #333; margin-top: 7px; }
.u-thanks { display: flex; justify-content: space-between; align-items: center; height: 22px; margin-top: 5.500px; padding: 0 56px; font-size: 15px; }
.tint { margin-top: -3px; --palm: #a86f1c; --cuff: #4c2a86; }
.gray { --palm: #b4b4b4; --cuff: #606060; }
.defs .palm { fill: var(--palm); }
.defs .cuff { fill: var(--cuff); }
.u-line { line-height: 18px; height: 18px; margin-top: 1px; font-size: 12.500px; display: flex; justify-content: center; }
.u-small { display: flex; justify-content: center; color: #343434; font-size: 11.500px; line-height: 13px; height: 13px; margin-top: 1px; }
.u-small.last { margin-top: 0; }
.page-scroll { margin-left: auto; width: 15px; display: flex; flex-direction: column; align-items: center; background: #5b5c5e; padding: 6px 2px 4px 0; }
.page-scroll .thumb { width: 9px; height: 718px; margin-top: 5px; border-radius: 5px; background: #363636; }
.page-scroll .up { border-bottom-color: #303030; }
.page-scroll .down { border-top-color: #303030; margin-top: auto; }
.banner { position: absolute; left: 1140px; top: 10px; width: 257px; height: 79px; background: #194263; border-radius: 4px; box-shadow: 0 2px 6px #4a4b4d; font-family: "Liberation Sans", sans-serif; font-weight: 700; color: #858a8e; padding: 6px 12px 0 0; }
.banner p { margin: 0; display: flex; justify-content: flex-end; }
.banner .b1 { font-size: 13px; line-height: 15px; font-weight: 400; -webkit-text-stroke: .3px; }
.banner .b2 { font-size: 11px; line-height: 13px; padding-right: 52px; font-weight: 400; -webkit-text-stroke: .3px; }
.banner .b3 { font-size: 10.500px; line-height: 13px; padding-right: 31px; color: #6c2231; font-weight: 400; }
.b-btns { display: flex; justify-content: flex-end; gap: 8px; margin-top: 3px; padding-right: 77px; font-size: 11.500px; }
.b-btns span { height: 19px; line-height: 19px; padding: 0 7px; border-radius: 2px; display: flex; justify-content: flex-end; }
.b-btns em { font-style: normal; }
.go { background: #214d23; width: 92px; }
.stop { background: #7a1d1d; width: 43px; }

.up, .down { width: 0; height: 0; border: 5px solid transparent; flex: none; }
.up { border-top: 0; border-bottom: 7px solid #8a8a8a; }
.down { border-bottom: 0; border-top: 7px solid #8a8a8a; }

.dialog { position: absolute; left: 216px; top: 53px; width: 990px; height: 653px; display: flex; background: #fff; box-shadow: 0 1px 3px rgba(0, 0, 0, .5); }
.preview { width: 610px; display: flex; background: #d9dbe0; border-right: 1px solid #e4e5e7; }
.sheets { width: 594px; padding-left: 76px; display: flex; flex-direction: column; gap: 15px; overflow: hidden; font-family: "Liberation Mono", monospace; }
.sheet { width: 443px; background: #fff; box-shadow: 0 1px 5px rgba(0, 0, 0, .65); padding: 0 13px 0 14px; flex: none; }
.first { height: 239px; padding-top: 3px; }
.second { height: 420px; }
.item-main { display: flex; align-items: center; font-weight: 700; font-size: 16px; line-height: 22px; color: #050505; }
.item-name { width: 247px; }
.item-line { display: flex; height: 22px; }
.item:nth-child(3) { margin-top: 1px; }
.item:nth-child(3) .price, .item:nth-child(3) .qty, .item:nth-child(3) .sum { margin-top: -1px; }
.qty { width: 12px; }
.price { width: 96px; display: flex; justify-content: center; }
.item .sum { margin-left: auto; width: 59px; display: flex; justify-content: flex-end; }
.sku { font-style: italic; font-size: 14.500px; line-height: 19px; height: 20px; color: #8a8a8a; display: flex; }
.mrp { display: flex; justify-content: flex-end; font-size: 14.500px; line-height: 15px; height: 15px; color: #8f8f8f; }
.dots { border-top: 2px dotted #555; }
.row { display: flex; justify-content: space-between; font-size: 17px; line-height: 20px; height: 22px; color: #2e2e2e; }
.row:nth-child(3) { padding-top: 1.500px; }
.row b { color: #000; }
.total { height: 35px; border: 3px solid #000; display: flex; justify-content: center; line-height: 28px; font-size: 21.500px; color: #000; }
.second .dots { margin-top: 0; }
.thanks { display: flex; justify-content: space-between; padding: 0 83px 0 84px; height: 28px; line-height: 26px; font-size: 21.500px; }
.thanks svg { margin-top: -2px; }
.line { display: flex; justify-content: center; font-size: 17.500px; line-height: 22px; height: 23px; color: #222; }
.small { display: flex; justify-content: center; font-size: 15px; line-height: 17.500px; height: 18.500px; color: #999; }
.scroll { display: flex; flex-direction: column; align-items: center; background: #fbfbfb; width: 15px; }
.scroll .thumb { width: 8px; border-radius: 4px; background: #8b8b8b; }
.scroll .down { margin-top: auto; }
.outer { padding: 5px 1px 5px 0; }
.outer .thumb { height: 307px; margin-top: 197px; width: 9px; }

.panel { flex: 1; display: flex; flex-direction: column; color: #2b2c2e; font-size: 12.500px; }
.panel-head { height: 57px; flex: none; display: flex; justify-content: space-between; align-items: center; padding: 15px 24px 0 23px; color: #1f1f1f; font-weight: 500; }
.panel-head h1 { margin: 0; font-size: 14.500px; font-weight: 400; }
.panel-head span { -webkit-text-stroke: .2px; }
.panel-body { height: 520px; flex: none; display: flex; border-bottom: 2px solid #d5d6d8; overflow: hidden; }
.form { width: 363px; display: flex; flex-direction: column; overflow: hidden; padding-top: 16px; }
.field { display: flex; align-items: center; height: 35.500px; margin-bottom: 18px; flex: none; padding-left: 23px; }
.field label { width: 142px; line-height: 18px; padding-top: 2px; }
.box { width: 175px; height: 36px; border: 1px solid #c7c8ca; border-radius: 8px; padding: 0 10px 0 10px; display: flex; align-items: center; font-size: 12px; }
.box span { padding-top: 1.500px; }
.box.input { width: 70px; }
.box.printer { padding-left: 6px; }
.box.printer svg { margin-right: 9px; }
.caret { margin-left: auto; width: 0; height: 0; border: 3.500px solid transparent; border-top: 4px solid #5f6368; border-bottom: 0; }
.more-row { border-top: 1px solid #e6e7e9; height: 90px; margin-top: -1px; flex: none; display: flex; justify-content: space-between; align-items: flex-start; padding: 26px 30px 0 23px; line-height: 20px; }
.more-row svg { margin-top: 6px; }
.peek { width: 66px; height: 20px; margin: -17px 0 0 167px; border: 1px solid #bbb; background: #e6e6e6; border-radius: 8px; flex: none; }
.inner { padding: 12px 0 2px 0; height: 518px; }
.inner .thumb { height: 371px; margin-top: 2px; }
.inner .up { margin-top: -4px; margin-bottom: 4px; }
.panel-foot { flex: 1; display: flex; justify-content: flex-end; gap: 8px; padding: 16px 25px 0 0; }
button { width: 72px; height: 36px; border-radius: 18px; border: 1px solid #a8c7fa; background: #fff; color: #1a5fd0; font: 600 12px "Open Sans", sans-serif; padding: 0; display: flex; align-items: center; justify-content: center; }
.primary { width: 66px; background: #0b57d0; border-color: #0b57d0; color: #fff; }

.r-taskbar { height: 47px; flex: none; border-top: 1px solid #b9b99a; display: flex; align-items: center; padding-right: 19px; color: #3a3a34; font-size: 11.500px;
  background: linear-gradient(90deg, #e3e9a6 0, #e8e6ad 17%, #e8e5ad 28%, #e0ecab 38%, #e3eda9 46%, #ebe5b4 56%, #eee4cf 65%, #ece3e2 75%, #e8dbd5 84%, #e7dfd4 92%, #dfe4c8 100%); }
.r-weather { margin: 0 0 2px 18px; }
.r-temp { margin: -2px 0 0 6px; width: 76px; display: flex; flex-direction: column; align-items: flex-start; line-height: 15.500px; }
.r-temp b { font-weight: 600; }
.r-temp span { color: #65675a; }
.r-start { margin-left: 268px; margin-top: -1px; }
.r-search { margin-left: 13px; width: 216px; height: 31px; border-radius: 16px; background: #f7f9e6; box-shadow: 0 1px 1px #b9bd93; display: flex; align-items: center; padding: 0 4px 0 10px; font-size: 12.500px; color: #5b5b55; }
.r-search span { margin-left: 10px; line-height: 20px; }
.coats { margin-left: auto; }
.r-apps { display: flex; margin: -1px 0 0 2.500px; }
.r-app { width: 43.400px; height: 46px; display: flex; align-items: center; justify-content: center; position: relative; }
.r-app svg { position: relative; }
.active.r-app::before { content: ""; position: absolute; left: 3px; right: 3px; top: 4px; bottom: 4px; background: #fbf8f5; border-radius: 4px; }
.active.r-app::after { content: ""; position: absolute; left: 14px; bottom: 4px; width: 15px; height: 3px; border-radius: 2px; background: #1173cf; }
.dot.r-app::after { content: ""; position: absolute; left: 19px; bottom: 4px; width: 6px; height: 3px; border-radius: 2px; background: #8a857b; }
.r-app .letter { position: absolute; left: 9.700px; top: 17px; width: 12px; font-size: 9.500px; line-height: 13px; font-weight: 700; text-align: center; color: #fff; }
.r-tray { margin-left: auto; display: flex; align-items: center; color: #333; }
.r-tray svg { margin-top: -1px; }
.r-tray .t-cloud { margin-left: 18px; }
.r-tray .t-net { margin-left: 15px; }
.r-tray .t-snd { margin-left: 6px; }
.r-clock { margin: -2px 0 0 12px; width: 56px; display: flex; flex-direction: column; align-items: flex-end; line-height: 15.500px; font-size: 11.500px; }

.taskbar { height: 72px; flex: none; border-top: 2px solid #4a464a; display: flex; align-items: center; color: #fff;
  background: linear-gradient(90deg, #202224 0, #202224 10%, #2d1b23 14%, #311b24 20%, #2b1e30 24%, #202126 30%, #212125 57%, #451718 62%, #212224 67%, #202224 78%, #2a1f24 86%, #331a25 94%, #3d1528 100%); }
.weather { position: relative; margin: 0 0 0 30px; width: 37px; height: 70px; display: flex; padding-top: 18px; }
.badge { position: absolute; left: 17px; top: 8px; width: 24px; height: 24px; border-radius: 50%; background: #fb8f9b; color: #111; font-size: 16px; line-height: 24px; text-align: center; }
.apps { margin-left: 243.500px; display: flex; }
.app { position: relative; left: .5px; width: 66.060px; height: 70px; display: flex; justify-content: center; padding-top: 16.500px; }
.app > svg { position: relative; }
.app .letter { position: absolute; color: #fff; font-weight: 700; text-align: center; }
.app .letter.illustrator { left: 16.500px; width: 33px; top: 19px; font-size: 17px; line-height: 26px; color: #ff9a00; }
.app .letter.outlook { left: 15px; width: 18px; top: 25px; font-size: 14px; line-height: 19px; }
.count { position: absolute; left: 31px; top: 9px; width: 30px; height: 24px; border-radius: 12px; background: #f5806a; color: #111; font-size: 16px; line-height: 24px; text-align: center; }
.avatar { position: absolute; left: 35px; top: 9px; width: 24px; height: 24px; border-radius: 50%; background: #2a641d; color: #e6efe3; font-size: 14px; line-height: 24px; text-align: center; }
.active.app::before { content: ""; position: absolute; left: 5px; right: 5px; top: 6px; bottom: 8px; border-radius: 5px; background: rgba(255, 255, 255, .03); }
.active.app::after, .dot.app::after { content: ""; position: absolute; left: 28.500px; bottom: 7px; width: 9px; height: 5px; border-radius: 3px; background: #a09c9c; }
.active.app::after { left: 22px; width: 22px; }
.tray { margin-left: auto; margin-right: 29px; display: flex; align-items: center; }
.h-cloud { margin-left: 27px; }
.h-pad { margin-left: 23px; }
.h-wifi { margin-left: 24px; margin-top: -2px; }
.h-snd { margin-left: 11px; }
.h-bat { margin-left: 11px; margin-top: -3px; }
.clock { margin-left: 24px; width: 93px; display: flex; flex-direction: column; align-items: flex-end; font-size: 17px; line-height: 24px; margin-top: -3px; }
</style>
